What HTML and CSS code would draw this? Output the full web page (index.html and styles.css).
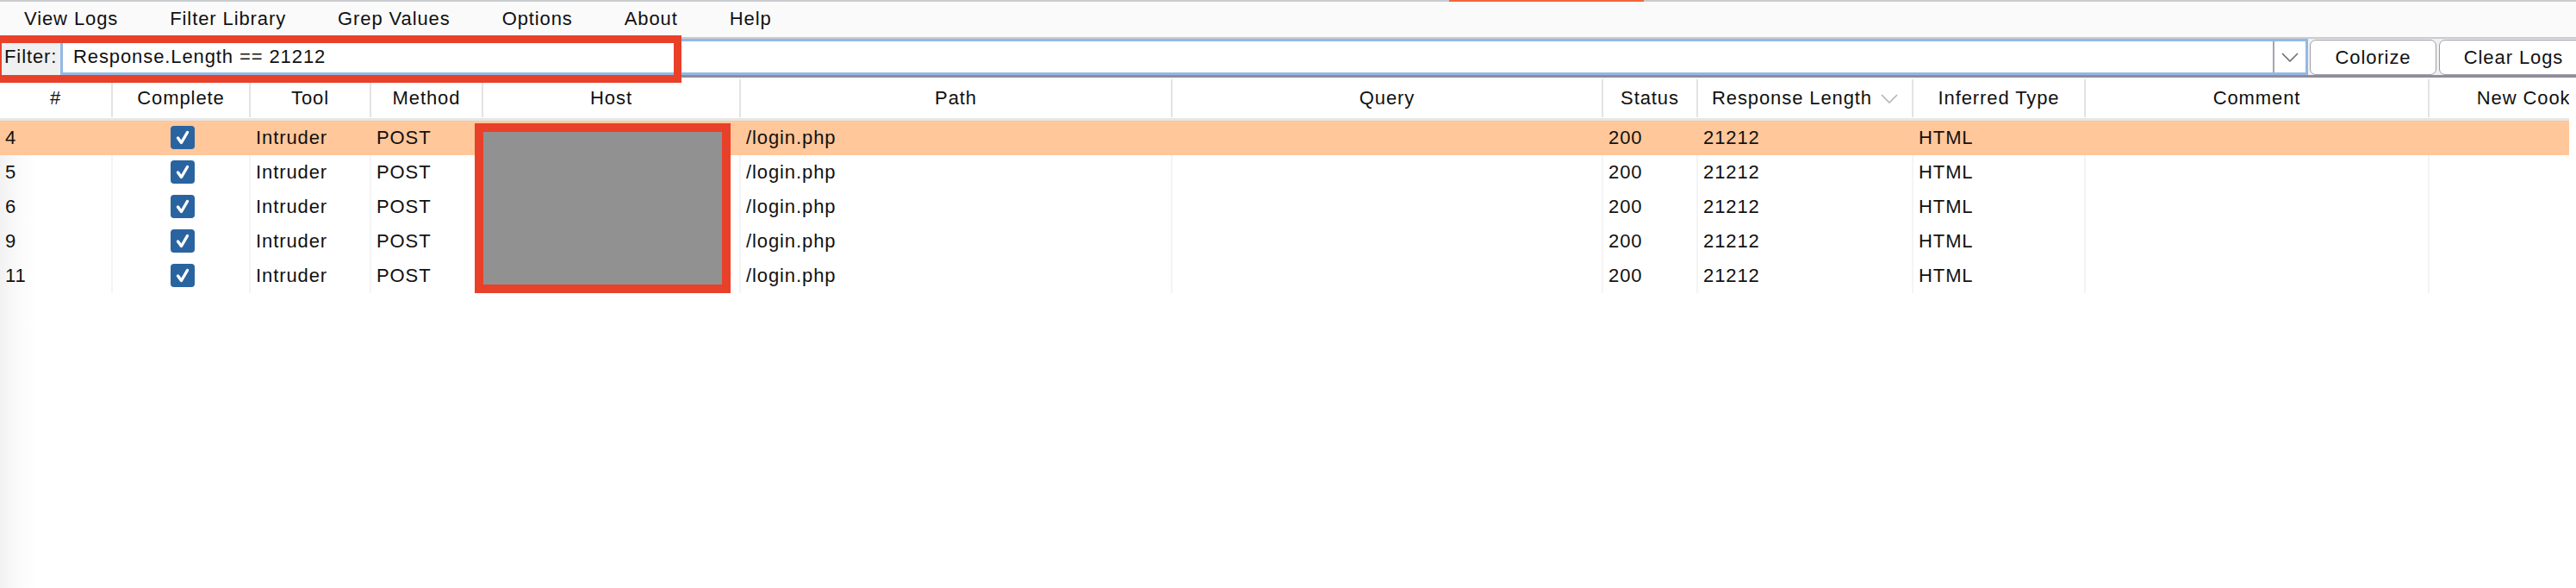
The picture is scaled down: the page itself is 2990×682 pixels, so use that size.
FILE: index.html
```html
<!DOCTYPE html>
<html lang="en">
<head>
<meta charset="utf-8">
<title>Logger</title>
<link rel="stylesheet" href="styles.css">
</head>
<body>
<div class="app">
  <div class="topline"><span class="accent"></span></div>
  <nav class="menubar">
    <span class="menu-item">View Logs</span>
    <span class="menu-item">Filter Library</span>
    <span class="menu-item">Grep Values</span>
    <span class="menu-item">Options</span>
    <span class="menu-item">About</span>
    <span class="menu-item">Help</span>
  </nav>
  <div class="filterbar">
    <span class="filter-label">Filter:</span>
    <div class="field">
      <span class="field-value">Response.Length == 21212</span>
      <span class="field-dd">
        <svg width="20" height="11" viewBox="0 0 20 11"><polyline points="1,1 10,10 19,1" fill="none" stroke="#6e6e6e" stroke-width="1.6"/></svg>
      </span>
    </div>
    <button class="btn btn-colorize">Colorize</button>
    <button class="btn btn-clear">Clear Logs</button>
  </div>
  <div class="table">
    <div class="thead">
      <div class="th">#</div>
      <div class="th">Complete</div>
      <div class="th">Tool</div>
      <div class="th">Method</div>
      <div class="th">Host</div>
      <div class="th">Path</div>
      <div class="th">Query</div>
      <div class="th">Status</div>
      <div class="th">Response Length<svg class="sort" width="20" height="11" viewBox="0 0 20 11"><polyline points="1,1 10,10 19,1" fill="none" stroke="#b4b4b4" stroke-width="1.6"/></svg></div>
      <div class="th">Inferred Type</div>
      <div class="th">Comment</div>
      <div class="th">New Cookies</div>
    </div>
    <div class="tbody">
      <div class="tr selected">
        <div class="td">4</div>
        <div class="td td-check"><span class="check"><svg width="28" height="27" viewBox="0 0 28 27"><polyline points="8.5,14 12.5,19.5 19.5,7.5" fill="none" stroke="#fff" stroke-width="3.4" stroke-linecap="round" stroke-linejoin="round"/></svg></span></div>
        <div class="td">Intruder</div>
        <div class="td">POST</div>
        <div class="td"></div>
        <div class="td">/login.php</div>
        <div class="td"></div>
        <div class="td">200</div>
        <div class="td">21212</div>
        <div class="td">HTML</div>
        <div class="td"></div>
        <div class="td"></div>
      </div>
      <div class="tr">
        <div class="td">5</div>
        <div class="td td-check"><span class="check"><svg width="28" height="27" viewBox="0 0 28 27"><polyline points="8.5,14 12.5,19.5 19.5,7.5" fill="none" stroke="#fff" stroke-width="3.4" stroke-linecap="round" stroke-linejoin="round"/></svg></span></div>
        <div class="td">Intruder</div>
        <div class="td">POST</div>
        <div class="td"></div>
        <div class="td">/login.php</div>
        <div class="td"></div>
        <div class="td">200</div>
        <div class="td">21212</div>
        <div class="td">HTML</div>
        <div class="td"></div>
        <div class="td"></div>
      </div>
      <div class="tr">
        <div class="td">6</div>
        <div class="td td-check"><span class="check"><svg width="28" height="27" viewBox="0 0 28 27"><polyline points="8.5,14 12.5,19.5 19.5,7.5" fill="none" stroke="#fff" stroke-width="3.4" stroke-linecap="round" stroke-linejoin="round"/></svg></span></div>
        <div class="td">Intruder</div>
        <div class="td">POST</div>
        <div class="td"></div>
        <div class="td">/login.php</div>
        <div class="td"></div>
        <div class="td">200</div>
        <div class="td">21212</div>
        <div class="td">HTML</div>
        <div class="td"></div>
        <div class="td"></div>
      </div>
      <div class="tr">
        <div class="td">9</div>
        <div class="td td-check"><span class="check"><svg width="28" height="27" viewBox="0 0 28 27"><polyline points="8.5,14 12.5,19.5 19.5,7.5" fill="none" stroke="#fff" stroke-width="3.4" stroke-linecap="round" stroke-linejoin="round"/></svg></span></div>
        <div class="td">Intruder</div>
        <div class="td">POST</div>
        <div class="td"></div>
        <div class="td">/login.php</div>
        <div class="td"></div>
        <div class="td">200</div>
        <div class="td">21212</div>
        <div class="td">HTML</div>
        <div class="td"></div>
        <div class="td"></div>
      </div>
      <div class="tr">
        <div class="td">11</div>
        <div class="td td-check"><span class="check"><svg width="28" height="27" viewBox="0 0 28 27"><polyline points="8.5,14 12.5,19.5 19.5,7.5" fill="none" stroke="#fff" stroke-width="3.4" stroke-linecap="round" stroke-linejoin="round"/></svg></span></div>
        <div class="td">Intruder</div>
        <div class="td">POST</div>
        <div class="td"></div>
        <div class="td">/login.php</div>
        <div class="td"></div>
        <div class="td">200</div>
        <div class="td">21212</div>
        <div class="td">HTML</div>
        <div class="td"></div>
        <div class="td"></div>
      </div>
    </div>
  </div>
  <div class="mark mark-filter"></div>
  <div class="mark mark-host"></div>
</div>
</body>
</html>
```
FILE: styles.css
```css
html, body {
  margin: 0;
  padding: 0;
  background: #ffffff;
}

body {
  width: 2990px;
  height: 682px;
  overflow: hidden;
  font-family: "Liberation Sans", Arial, Helvetica, sans-serif;
  font-size: 22px;
  letter-spacing: 0.9px;
  color: #111111;
}

.app {
  position: relative;
  width: 2990px;
  height: 682px;
  overflow: hidden;
  display: flex;
  flex-direction: column;
}

.topline {
  height: 2px;
  background: #c9ccd0;
  padding-left: 1682px;
  display: flex;
  flex: none;
}

.accent {
  width: 226px;
  height: 2px;
  background: #f2663a;
}

.menubar {
  height: 41px;
  flex: none;
  display: flex;
  align-items: center;
  gap: 60px;
  padding-left: 28px;
  background: #fafafa;
  border-bottom: 2px solid #c9cbce;
}

.menu-item {
  white-space: nowrap;
  line-height: 1;
  padding-bottom: 1px;
}

.filterbar {
  flex: none;
  width: 3004px;
  height: 42px;
  display: flex;
  align-items: stretch;
  background: #f0f0f0;
  border-bottom: 3px solid #8f8d9b;
}

.filter-label {
  width: 70px;
  flex: none;
  box-sizing: border-box;
  padding-left: 5px;
  display: flex;
  align-items: center;
}

.field {
  flex: 1;
  display: flex;
  align-items: stretch;
  background: #ffffff;
  border: 3px solid #93b8e6;
  box-sizing: border-box;
}

.field-value {
  flex: 1;
  display: flex;
  align-items: center;
  padding-left: 12px;
  white-space: nowrap;
}

.field-dd {
  width: 38px;
  flex: none;
  box-sizing: border-box;
  border-left: 2px solid #a6a5ae;
  display: flex;
  align-items: center;
  justify-content: center;
}

.btn {
  flex: none;
  font: inherit;
  letter-spacing: inherit;
  color: #111111;
  background: #ffffff;
  border: 1.5px solid #9e9da8;
  border-radius: 7px;
  margin: 1px 0 0 2px;
  padding: 0;
  height: 41px;
  box-sizing: border-box;
}

.btn-colorize {
  width: 147px;
}

.btn-clear {
  width: 173px;
  margin-left: 3px;
}

.table {
  width: 2982px;
  overflow: hidden;
  flex: 1;
  display: flex;
  flex-direction: column;
}

.thead,
.tr {
  display: grid;
  grid-template-columns: 129px 160px 140px 130px 299px 501px 500px 110px 250px 200px 399px 251px;
  width: 3069px;
}

.thead {
  flex: none;
  padding: 2px 0 1px;
  background: #ffffff;
  border-bottom: 3px solid #e6e6e6;
}

.th {
  height: 44px;
  box-sizing: border-box;
  display: flex;
  align-items: center;
  justify-content: center;
  white-space: nowrap;
  overflow: hidden;
  border-left: 2px solid #e3e3e3;
}

.th:first-child {
  border-left: none;
}

.sort {
  margin-left: 10px;
  flex: none;
}

.tbody {
  flex: 1;
  background: linear-gradient(to right, #f2f2f2 0px, #fafafa 20px, #ffffff 42px);
}

.tr {
  height: 40px;
}

.tr.selected {
  background: #ffc79a;
}

.td {
  box-sizing: border-box;
  display: flex;
  align-items: center;
  padding-left: 6px;
  white-space: nowrap;
  overflow: hidden;
  border-left: 2px solid #f4f4f4;
}

.tr.selected .td {
  border-left-color: transparent;
}

.td:first-child {
  border-left: none;
}

.td-check {
  justify-content: center;
  padding-left: 4px;
}

.check {
  width: 28px;
  height: 27px;
  border-radius: 4px;
  background: #2a64a0;
  display: block;
  margin-top: -1px;
}

.check svg {
  display: block;
}

.mark {
  position: absolute;
  box-sizing: border-box;
  border-style: solid;
  border-color: #e9402a;
  pointer-events: none;
}

.mark-filter {
  left: -7px;
  top: 41px;
  width: 798px;
  height: 55px;
  border-width: 9px;
}

.mark-host {
  left: 551px;
  top: 143px;
  width: 297px;
  height: 197px;
  border-width: 10px;
  background: #919191;
  background-clip: padding-box;
}
```
